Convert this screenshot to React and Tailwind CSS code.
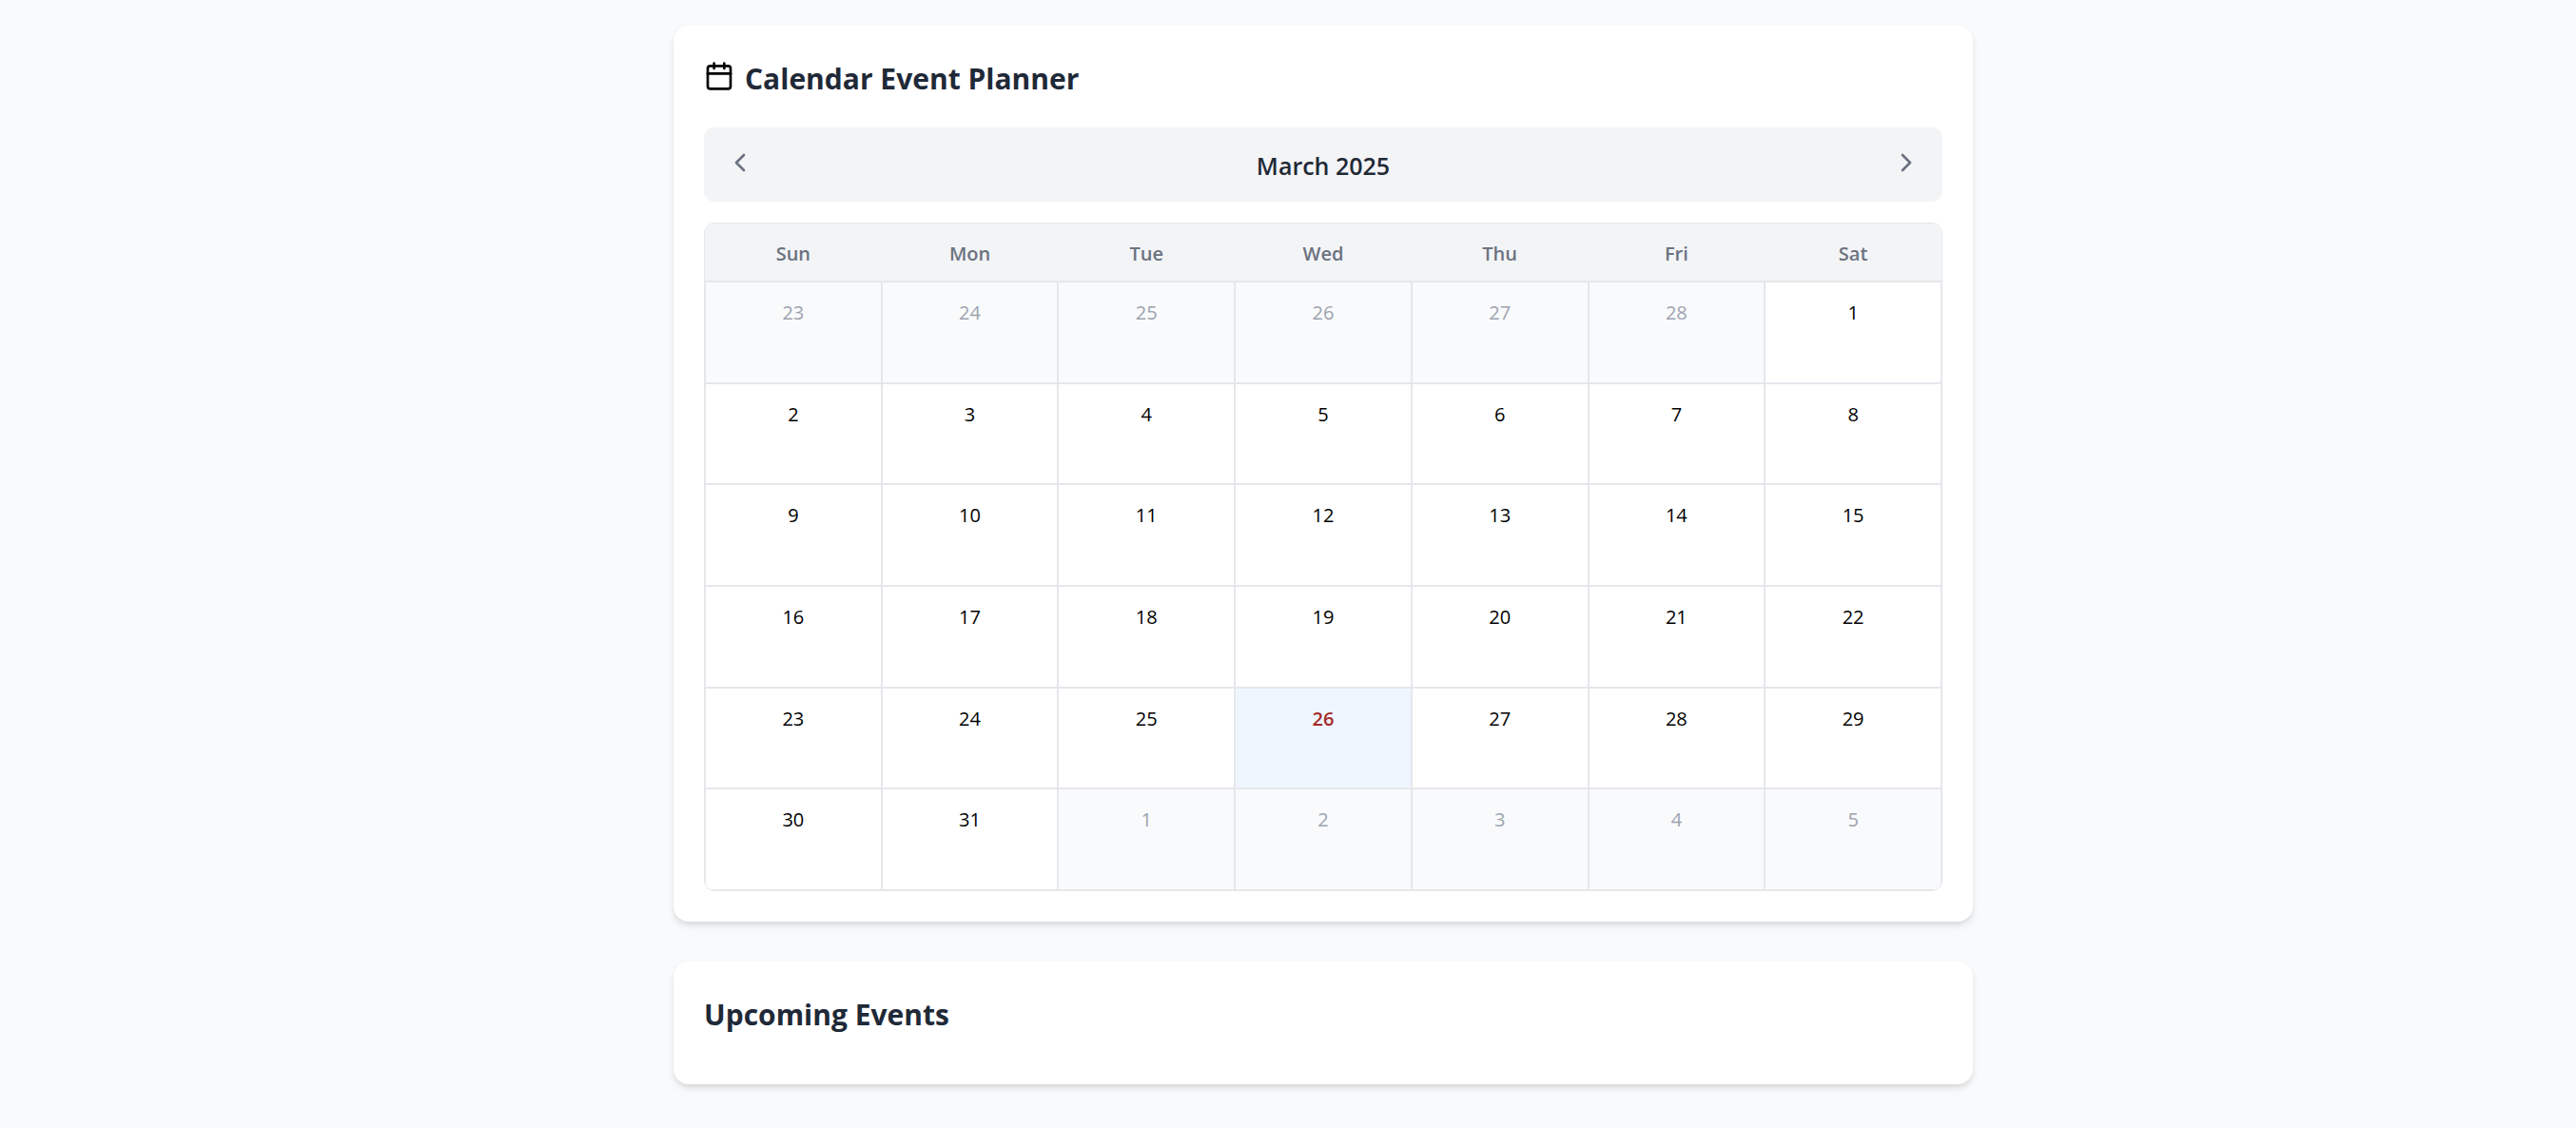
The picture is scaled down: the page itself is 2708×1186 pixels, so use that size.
import { Calendar, ChevronLeft, ChevronRight } from 'lucide-react';

const WEEKDAYS = ['Sun', 'Mon', 'Tue', 'Wed', 'Thu', 'Fri', 'Sat'];
const YEAR = 2025;
const MONTH = 2;
const TODAY = 26;

function buildWeeks(year, month) {
  const offset = new Date(year, month, 1).getDay();
  return Array.from({ length: 6 }, (_, week) =>
    Array.from({ length: 7 }, (_, day) => {
      const date = new Date(year, month, 1 - offset + week * 7 + day);
      return { day: date.getDate(), current: date.getMonth() === month };
    })
  );
}

function cellStyle({ day, current }) {
  if (!current) return 'bg-[#f9fafb] text-[#9ca3af]';
  if (day === TODAY) return 'bg-[#eff6ff] font-semibold text-[#a52a2a]';
  return 'text-black';
}

function Card({ children }) {
  return (
    <section className="rounded-2xl bg-white p-8 shadow-[0_5px_8px_-1px_rgba(0,0,0,0.1),0_3px_5px_-1px_rgba(0,0,0,0.06)]">
      {children}
    </section>
  );
}

function MonthBar() {
  return (
    <div className="flex items-start justify-between rounded-[11px] bg-[#f3f4f6] px-[22px] pt-[21px] pb-[19px] text-[#6b7280]">
      <button type="button" aria-label="Previous month">
        <ChevronLeft size={32} />
      </button>
      <h2 className="text-[25px] leading-[38px] font-semibold text-[#1f2937]">March 2025</h2>
      <button type="button" aria-label="Next month">
        <ChevronRight size={32} />
      </button>
    </div>
  );
}

function MonthTable() {
  return (
    <div className="overflow-hidden rounded-[11px] border border-[#e5e7eb]">
      <table className="h-[701px] w-full table-fixed border-separate border-spacing-0 text-center text-[20px] leading-7">
        <thead>
          <tr className="h-[61px] bg-[#f3f4f6] text-[#6b7280]">
            {WEEKDAYS.map((name) => (
              <th key={name} scope="col" className="border-b border-[#e5e7eb] pt-1 font-semibold">
                {name}
              </th>
            ))}
          </tr>
        </thead>
        <tbody>
          {buildWeeks(YEAR, MONTH).map((week, i) => (
            <tr key={i}>
              {week.map((cell) => (
                <td
                  key={cell.day}
                  className={`border border-[#e5e7eb] pt-[18px] align-top ${cellStyle(cell)}`}
                >
                  {cell.day}
                </td>
              ))}
            </tr>
          ))}
        </tbody>
      </table>
    </div>
  );
}

export default function App() {
  return (
    <main className="min-h-screen bg-[#f9fafb] py-[27px] pl-[74px] font-['Open_Sans','Noto_Sans',sans-serif]">
      <div className="mx-auto flex max-w-[1366px] flex-col gap-[42px]">
        <Card>
          <header className="mb-8 flex items-start gap-[11px] pt-[5px]">
            <Calendar size={32} className="text-black" />
            <h1 className="text-[30px] leading-[38px] font-bold text-[#1f2937]">
              Calendar Event Planner
            </h1>
          </header>
          <div className="flex flex-col gap-[22px]">
            <MonthBar />
            <MonthTable />
          </div>
        </Card>
        <Card>
          <h2 className="pt-1 pb-[21px] text-[30px] leading-10 font-bold text-[#1f2937]">
            Upcoming Events
          </h2>
        </Card>
      </div>
    </main>
  );
}
